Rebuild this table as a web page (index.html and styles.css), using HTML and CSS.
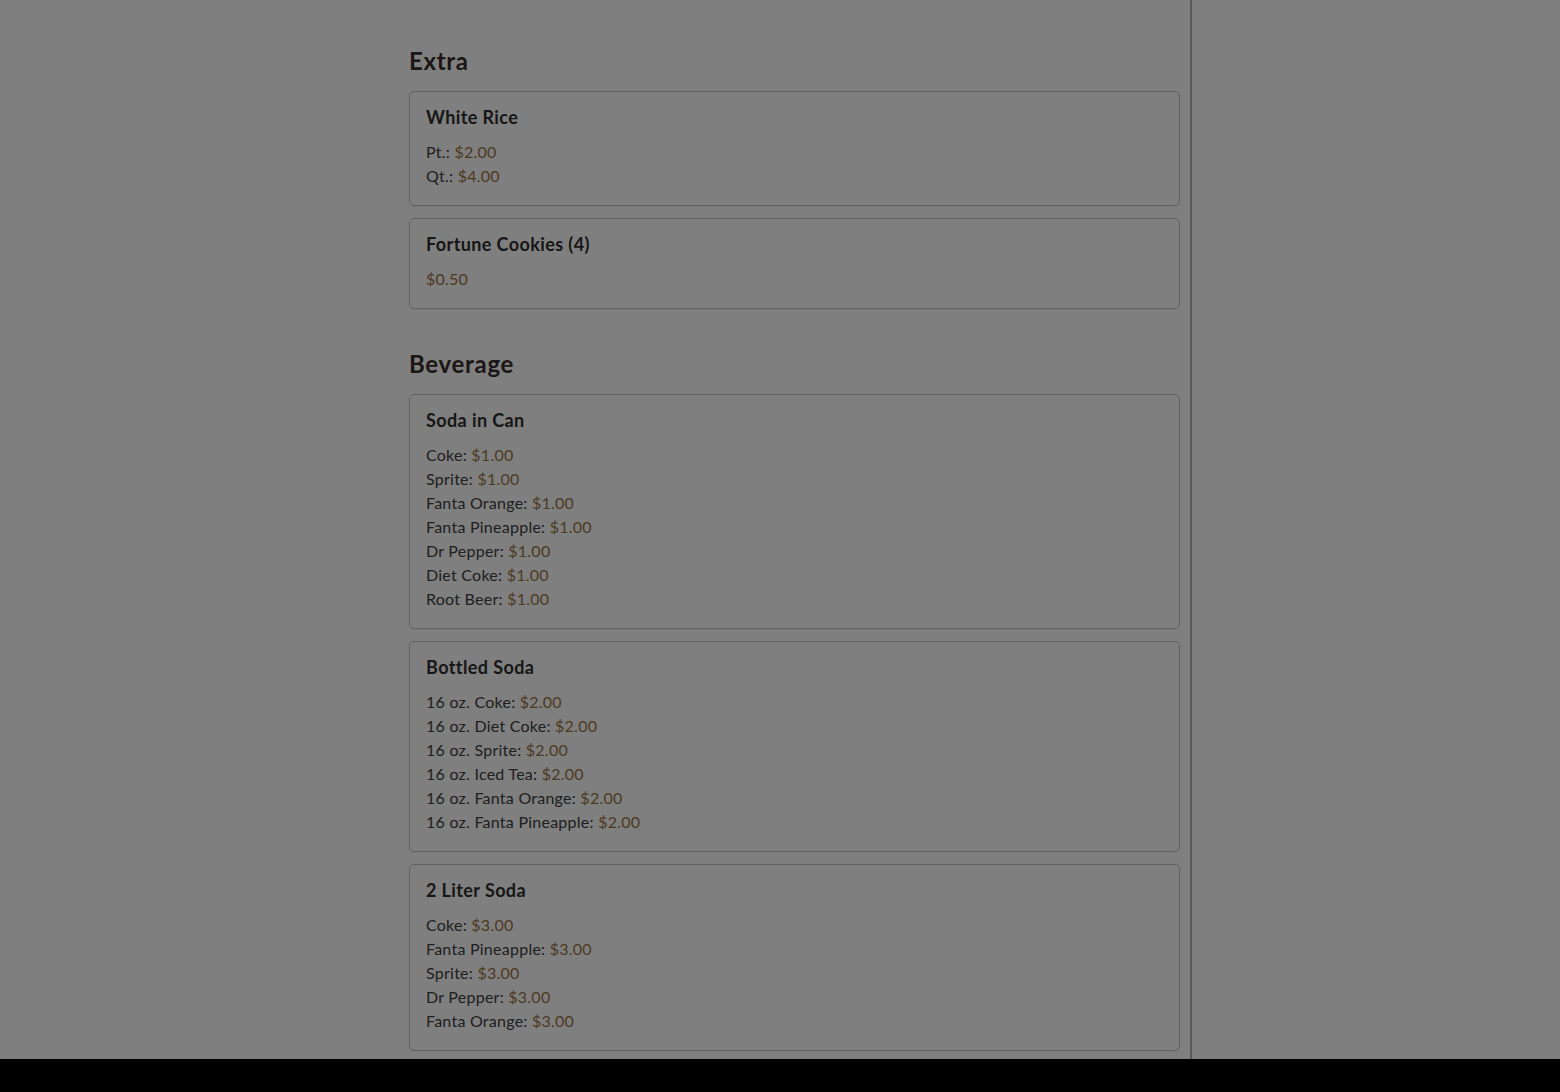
FILE: index.html
```html
<!DOCTYPE html>
<html lang="en">
<head>
<meta charset="utf-8">
<title>Menu</title>
<link rel="stylesheet" href="styles.css">
</head>
<body>
<div class="page">
  <main class="menu">
    <section class="category">
      <h2 class="category-title">Extra</h2>
      <div class="item">
        <h3 class="item-name">White Rice</h3>
        <div class="price-row">Pt.: <span class="price">$2.00</span></div>
        <div class="price-row">Qt.: <span class="price">$4.00</span></div>
      </div>
      <div class="item">
        <h3 class="item-name">Fortune Cookies (4)</h3>
        <div class="price-row"><span class="price">$0.50</span></div>
      </div>
    </section>
    <section class="category">
      <h2 class="category-title">Beverage</h2>
      <div class="item">
        <h3 class="item-name">Soda in Can</h3>
        <div class="price-row">Coke: <span class="price">$1.00</span></div>
        <div class="price-row">Sprite: <span class="price">$1.00</span></div>
        <div class="price-row">Fanta Orange: <span class="price">$1.00</span></div>
        <div class="price-row">Fanta Pineapple: <span class="price">$1.00</span></div>
        <div class="price-row">Dr Pepper: <span class="price">$1.00</span></div>
        <div class="price-row">Diet Coke: <span class="price">$1.00</span></div>
        <div class="price-row">Root Beer: <span class="price">$1.00</span></div>
      </div>
      <div class="item">
        <h3 class="item-name">Bottled Soda</h3>
        <div class="price-row">16 oz. Coke: <span class="price">$2.00</span></div>
        <div class="price-row">16 oz. Diet Coke: <span class="price">$2.00</span></div>
        <div class="price-row">16 oz. Sprite: <span class="price">$2.00</span></div>
        <div class="price-row">16 oz. Iced Tea: <span class="price">$2.00</span></div>
        <div class="price-row">16 oz. Fanta Orange: <span class="price">$2.00</span></div>
        <div class="price-row">16 oz. Fanta Pineapple: <span class="price">$2.00</span></div>
      </div>
      <div class="item">
        <h3 class="item-name">2 Liter Soda</h3>
        <div class="price-row">Coke: <span class="price">$3.00</span></div>
        <div class="price-row">Fanta Pineapple: <span class="price">$3.00</span></div>
        <div class="price-row">Sprite: <span class="price">$3.00</span></div>
        <div class="price-row">Dr Pepper: <span class="price">$3.00</span></div>
        <div class="price-row">Fanta Orange: <span class="price">$3.00</span></div>
      </div>
    </section>
  </main>
  <aside class="side"></aside>
</div>
<footer class="bottom-bar"></footer>
<div class="backdrop"></div>
</body>
</html>
```
FILE: styles.css
```css
html, body {
  margin: 0;
  padding: 0;
  background: #ffffff;
  font-family: Lato, "Noto Sans", sans-serif;
  color: #363636;
  height: 100%;
  overflow: hidden;
}

.page {
  display: flex;
  padding-left: 409px;
  min-height: 100%;
}

.menu {
  width: 771px;
  padding-right: 10px;
  border-right: 2px solid #b4b4b4;
  padding-top: 46px;
}

.side {
  flex: 1;
}

.category {
  margin-bottom: 40px;
}

.category-title {
  margin: 0 0 16px 0;
  font-size: 24px;
  line-height: 29px;
  font-weight: 700;
  letter-spacing: 0.7px;
  color: #382c2c;
}

.item {
  border: 1px solid #c4c4c4;
  border-radius: 5px;
  padding: 16px 16px 17px 16px;
  margin-bottom: 12px;
  box-shadow: 0 1px 2px rgba(0,0,0,0.05);
}

.item-name {
  margin: 0 0 14px 0;
  font-size: 18px;
  line-height: 18px;
  font-weight: 700;
  letter-spacing: 0.4px;
  color: #2e2e2e;
}

.price-row {
  font-size: 16px;
  line-height: 24px;
  letter-spacing: 0.25px;
  color: #404040;
}

.price {
  color: #9a7444;
}

.bottom-bar {
  position: fixed;
  left: 0;
  right: 0;
  bottom: 0;
  height: 33px;
  background: #000000;
}

.backdrop {
  position: fixed;
  inset: 0;
  background: rgba(0, 0, 0, 0.5);
}
```
